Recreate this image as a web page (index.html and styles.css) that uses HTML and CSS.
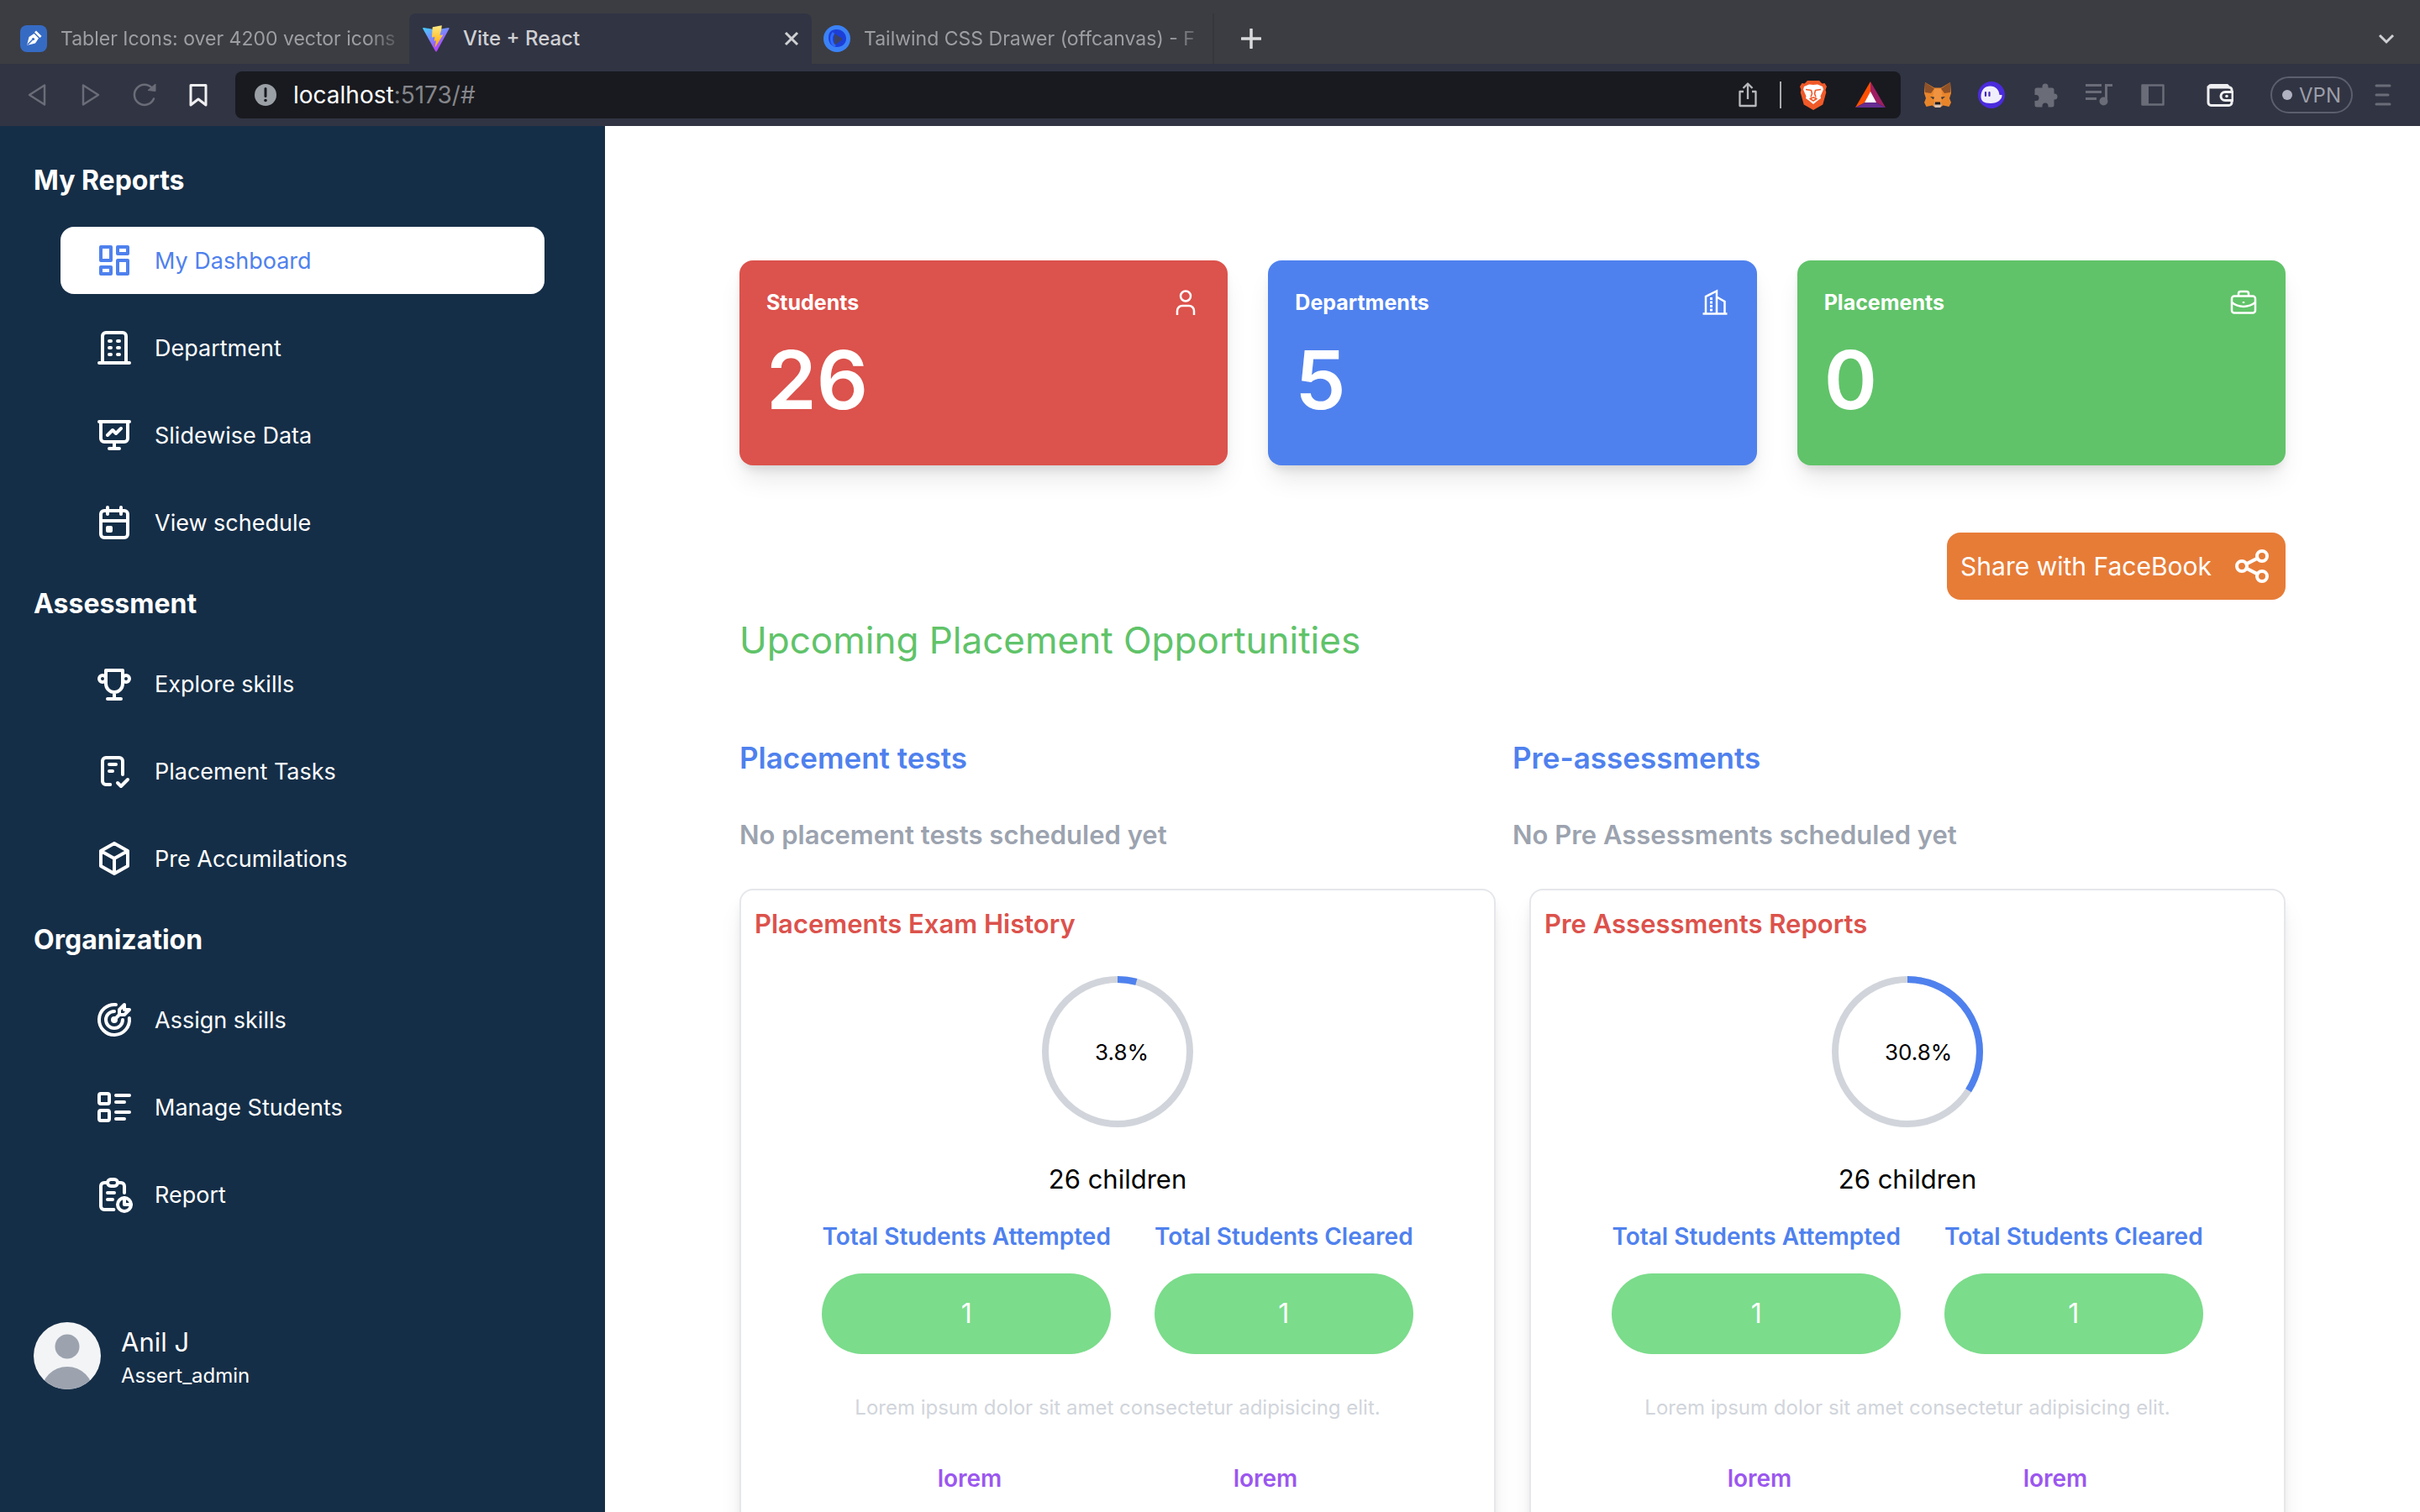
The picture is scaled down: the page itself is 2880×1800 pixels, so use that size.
FILE: index.html
```html
<!DOCTYPE html>
<html lang="en">
<head>
<meta charset="utf-8">
<meta name="viewport" content="width=device-width, initial-scale=1">
<title>Vite + React</title>
<link rel="stylesheet" href="styles.css">
</head>
<body>
<header class="browser">
  <div class="tabs">
    <div class="tab">
      <svg class="favicon" viewBox="0 0 32 32"><rect width="32" height="32" rx="8" fill="#366bc4"/><path d="M8 24l2.500-10 6-4 5.500 5.500-4 6z" fill="#fff"/><path d="M17 8.500l2-2 6.500 6.500-2 2z" fill="#fff"/><path d="M8.500 23.500l6-6" stroke="#366bc4" stroke-width="1.500"/><circle cx="15.500" cy="16.500" r="1.600" fill="#366bc4"/></svg>
      <span class="tab-title tab-title-fade">Tabler Icons: over 4200 vector icons</span>
    </div>
    <div class="tab tab-active">
      <svg class="favicon" viewBox="0 0 32 32"><defs><linearGradient id="vite-a" x1="0" y1="0" x2="0.600" y2="1"><stop offset="0" stop-color="#41d1ff"/><stop offset="1" stop-color="#bd34fe"/></linearGradient><linearGradient id="vite-b" x1="0" y1="0" x2="0" y2="1"><stop offset="0" stop-color="#ffea83"/><stop offset="1" stop-color="#ffa800"/></linearGradient></defs><path d="M31.500 4.300L16.900 30.900a1 1 0 0 1-1.700 0L.300 4.300a1 1 0 0 1 1-1.400L16 5.500l14.600-2.600a1 1 0 0 1 .9 1.400z" fill="url(#vite-a)"/><path d="M22.800.200L12 2.300a.5.500 0 0 0-.3.400l-.7 11.300a.5.500 0 0 0 .5.500l3.100-.7-1 4.500c0 .3.200.6.600.5l1.900-.6-1.500 7.100c-.1.500.5.700.8.300L24 12c.2-.3 0-.7-.4-.6l-3.200.6 1.900-6.900z" fill="url(#vite-b)"/></svg>
      <span class="tab-title">Vite + React</span>
      <button class="tab-close" aria-label="Close tab"><svg viewBox="0 0 20 20"><path d="M3 3l14 14M17 3L3 17" fill="none" stroke="currentColor" stroke-width="3"/></svg></button>
    </div>
    <div class="tab tab-last">
      <svg class="favicon" viewBox="0 0 32 32"><circle cx="16" cy="16" r="16" fill="#3b82f6"/><path d="M9 7c8-5 18 0 18 9 0 6-5 10-11 10-7 0-10-6-10-11 0-4 1-6 3-8z" fill="#1c3fd8"/><path d="M13 10l8 5c2 1 1 3-1 4l-7 5z" fill="#3c4263"/><path d="M12 9c-4 5-3 13 2 16" fill="none" stroke="#2f6af5" stroke-width="3"/></svg>
      <span class="tab-title tab-title-fade">Tailwind CSS Drawer (offcanvas) - F</span>
    </div>
    <button class="tab-new" aria-label="New tab"><svg viewBox="0 0 24 24"><path d="M12 1v22M1 12h22" fill="none" stroke="currentColor" stroke-width="3.500" stroke-linecap="round"/></svg></button>
    <button class="tab-search" aria-label="Search tabs"><svg viewBox="0 0 24 24"><path d="M4 8l8 8 8-8" fill="none" stroke="currentColor" stroke-width="3"/></svg></button>
  </div>
  <div class="toolbar">
    <button class="tool dim" aria-label="Back"><svg viewBox="0 0 32 32"><path d="M25 4.500v23L7 16z" fill="none" stroke="currentColor" stroke-width="2.500" stroke-linejoin="round"/></svg></button>
    <button class="tool dim" aria-label="Forward"><svg viewBox="0 0 32 32"><path d="M7 4.500v23L25 16z" fill="none" stroke="currentColor" stroke-width="2.500" stroke-linejoin="round"/></svg></button>
    <button class="tool dim" aria-label="Reload"><svg viewBox="0 0 32 32"><path d="M27 20.500A12 12 0 1 1 25 8" fill="none" stroke="currentColor" stroke-width="2.500" stroke-linecap="round"/><path d="M20 10.500l9 1V3z" fill="currentColor" stroke="currentColor" stroke-width="1"/></svg></button>
    <button class="tool bright" aria-label="Bookmark"><svg viewBox="0 0 32 32"><path d="M7 4.500h18v23.500l-9-7-9 7z" fill="none" stroke="currentColor" stroke-width="3" stroke-linejoin="round"/></svg></button>
    <div class="address">
      <svg class="site-info" viewBox="0 0 26 26"><circle cx="13" cy="13" r="13" fill="#9aa0a6"/><path d="M13 5.500v9" stroke="#191a1f" stroke-width="3" stroke-linecap="round"/><circle cx="13" cy="19.500" r="1.800" fill="#191a1f"/></svg>
      <div class="url" role="textbox" aria-label="Address"><span class="url-host">localhost</span>:5173/#</div>
      <button class="tool share-page" aria-label="Share this page"><svg viewBox="0 0 32 32"><path d="M11 12H6.500v17h19V12H21M16 21V3M10.500 8L16 2.500 21.500 8" fill="none" stroke="currentColor" stroke-width="2.300" stroke-linejoin="round"/></svg></button>
      <span class="divider"></span>
      <button class="tool" aria-label="Brave Shields"><svg class="tall" viewBox="0 0 32 36"><path d="M9 1h14l3.500 3.500 3-.5 2.500 4-1.500 4 .8 3-4 14.500L16 36 4.700 29.500.700 15l.8-3L0 8l2.500-4 3 .5z" fill="#f15a29"/><path d="M16 6l5-.6L27 8l1 3.500-3.500 8 .5 2.500-3.500 2.500L16 29l-5.500-4.500L7 22l.5-2.500L4 11.500 5 8l6-2.600z" fill="#fff"/><path d="M7 11.500l6.500 1 1 4-1.500 4M25 11.500l-6.500 1-1 4 1.500 4M12 22.500l4-1.500 4 1.500-4 2.500z" fill="none" stroke="#f15a29" stroke-width="1.600" stroke-linejoin="round"/></svg></button>
      <button class="tool rewards" aria-label="Brave Rewards"><svg class="wide" viewBox="0 0 36 32"><path d="M18 0L0 31l11.500-6L18 13z" fill="#ff5000"/><path d="M18 0v13l6.500 12L36 31z" fill="#9e1f63"/><path d="M0 31l11.500-6h13L36 31z" fill="#662d91"/><path d="M18 12l7 13H11z" fill="#fff"/></svg></button>
    </div>
    <div class="extensions">
      <button class="tool" aria-label="MetaMask"><svg viewBox="0 0 32 32"><path d="M1 1l11 6.500h8L31 1l1 13-2 6 2 5-2.500 5-7-1.500L19 31h-6l-3.500-2.500-7 1.500L0 25l2-5-2-6z" fill="#e8852b"/><path d="M1 1l11 7.500-4 5.500-7-1zM31 1l-11 7.500 4 5.500 7-1z" fill="#8f5128"/><path d="M12 8.500h8l2 11-3 6h-6l-3-6z" fill="#f09340"/><path d="M7 18l5 .5-1 3zM25 18l-5 .5 1 3z" fill="#3d3a3a"/><path d="M12.500 25h7l1 3-1.500 3h-6l-1.500-3z" fill="#d7c1b3"/><path d="M13 24.500h6l.500 3h-7z" fill="#1d1b1b"/></svg></button>
      <button class="tool" aria-label="Phantom"><svg viewBox="0 0 32 32"><circle cx="16" cy="16" r="16" fill="#4b2bdc"/><path d="M3.500 18C3.500 10 8 5.500 14.500 5.500S25 10 25.500 16h3c.5 5-5 10-13.500 10S3.500 23 3.500 18z" fill="#f1eefb"/><path d="M9 13v4M13.500 13v4" stroke="#4329b8" stroke-width="2.200" stroke-linecap="round"/></svg></button>
      <button class="tool dim" aria-label="Extensions"><svg viewBox="0 0 32 32"><path d="M12.500 6a3.500 3.500 0 0 1 7 0v1.500H24a2.500 2.500 0 0 1 2.500 2.500v4.500h.5a3.500 3.500 0 0 1 0 7h-.5V28a2.500 2.500 0 0 1-2.500 2.500h-4.500v-1.500a3.500 3.500 0 0 0-7 0v1.500H6A2.500 2.500 0 0 1 3.500 28v-5H5a3.500 3.500 0 0 0 0-7H3.500v-6A2.500 2.500 0 0 1 6 7.500h6.500z" fill="currentColor"/></svg></button>
      <button class="tool dim" aria-label="Media"><svg viewBox="0 0 32 32"><path d="M0 4.500h19M0 12.500h19M0 20.500h13" stroke="currentColor" stroke-width="3"/><path d="M24.500 24V4.500H32" fill="none" stroke="currentColor" stroke-width="3"/><circle cx="21.500" cy="23.500" r="5" fill="currentColor"/></svg></button>
      <button class="tool dim" aria-label="Side panel"><svg viewBox="0 0 32 32"><path d="M3.500 4.500h25v23h-25z" fill="none" stroke="currentColor" stroke-width="2.500" stroke-linejoin="round"/><path d="M3 4h8v24H3z" fill="currentColor"/></svg></button>
    </div>
    <button class="tool bright wallet" aria-label="Wallet"><svg viewBox="0 0 32 32"><path d="M30 12V10a3 3 0 0 0-3-3H2V25a3.500 3.500 0 0 0 3.500 3.500H26.500A3.500 3.500 0 0 0 30 25v-2M2 8a3.500 3.500 0 0 1 3.500-3.500H24.500L28 8" fill="none" stroke="currentColor" stroke-width="3"/><path d="M31 12.500H22a5 5 0 0 0 0 10h9z" fill="none" stroke="currentColor" stroke-width="3"/><circle cx="24" cy="17.500" r="1.800" fill="currentColor"/></svg></button>
    <button class="vpn"><span class="vpn-dot"></span>VPN</button>
    <button class="tool dim menu" aria-label="Menu"><svg viewBox="0 0 32 32"><path d="M8 5h16M8 16h14M8 27h16" stroke="currentColor" stroke-width="3" stroke-linecap="round"/></svg></button>
  </div>
</header>

<div class="app">
  <aside class="sidebar">
    <nav class="nav">
      <h2 class="nav-heading">My Reports</h2>
      <ul class="nav-list">
        <li><a class="nav-link nav-link-active" href="#"><svg class="icon" viewBox="0 0 24 24"><path d="M4 4h6v8H4zM4 16h6v4H4zM14 12h6v8h-6zM14 4h6v4h-6z"/></svg>My Dashboard</a></li>
        <li><a class="nav-link" href="#"><svg class="icon" viewBox="0 0 24 24"><path d="M3 21h18M9 8h1M9 12h1M9 16h1M14 8h1M14 12h1M14 16h1M5 21V5a2 2 0 0 1 2-2h10a2 2 0 0 1 2 2v16"/></svg>Department</a></li>
        <li><a class="nav-link" href="#"><svg class="icon" viewBox="0 0 24 24"><path d="M3 4h18M4 4v10a2 2 0 0 0 2 2h12a2 2 0 0 0 2-2V4M12 16v4M9 20h6M8 12l3-3 2 2 3-3"/></svg>Slidewise Data</a></li>
        <li><a class="nav-link" href="#"><svg class="icon" viewBox="0 0 24 24"><path d="M4 7a2 2 0 0 1 2-2h12a2 2 0 0 1 2 2v12a2 2 0 0 1-2 2H6a2 2 0 0 1-2-2zM16 3v4M8 3v4M4 11h16M8 15h2v2H8z"/></svg>View schedule</a></li>
      </ul>
      <h2 class="nav-heading">Assessment</h2>
      <ul class="nav-list">
        <li><a class="nav-link" href="#"><svg class="icon" viewBox="0 0 24 24"><path d="M8 21h8M12 17v4M7 4h10M17 4v8a5 5 0 0 1-10 0V4"/><circle cx="5" cy="9" r="2"/><circle cx="19" cy="9" r="2"/></svg>Explore skills</a></li>
        <li><a class="nav-link" href="#"><svg class="icon" viewBox="0 0 24 24"><path d="M9.615 20H7a2 2 0 0 1-2-2V6a2 2 0 0 1 2-2h8a2 2 0 0 1 2 2v8M14 19l2 2 4-4M9 8h4M9 12h2"/></svg>Placement Tasks</a></li>
        <li><a class="nav-link" href="#"><svg class="icon" viewBox="0 0 24 24"><path d="M12 3l8 4.500v9L12 21l-8-4.500v-9zM12 12l8-4.500M12 12v9M12 12L4 7.500"/></svg>Pre Accumilations</a></li>
      </ul>
      <h2 class="nav-heading">Organization</h2>
      <ul class="nav-list">
        <li><a class="nav-link" href="#"><svg class="icon" viewBox="0 0 24 24"><circle cx="12" cy="12" r="1"/><path d="M12 7a5 5 0 1 0 5 5M13 3.055A9 9 0 1 0 20.941 11M15 6v3h3l3-3h-3V3zM15 9l-3 3"/></svg>Assign skills</a></li>
        <li><a class="nav-link" href="#"><svg class="icon" viewBox="0 0 24 24"><path d="M13 5h8M13 9h5M13 15h8M13 19h5"/><rect x="3" y="4" width="6" height="6" rx="1"/><rect x="3" y="14" width="6" height="6" rx="1"/></svg>Manage Students</a></li>
        <li><a class="nav-link" href="#"><svg class="icon" viewBox="0 0 24 24"><path d="M8 5H6a2 2 0 0 0-2 2v12a2 2 0 0 0 2 2h5.697M18 14v4h4M18 11V7a2 2 0 0 0-2-2h-2M8 11h4M8 15h3"/><rect x="8" y="3" width="6" height="4" rx="2"/><circle cx="18" cy="18" r="4"/></svg>Report</a></li>
      </ul>
    </nav>
    <div class="profile">
      <svg class="avatar" viewBox="0 0 80 80"><defs><clipPath id="avatar-clip"><circle cx="40" cy="40" r="40"/></clipPath></defs><g clip-path="url(#avatar-clip)"><rect width="80" height="80" fill="#f3f4f6"/><circle cx="40" cy="29" r="14.500" fill="#9ca3af"/><circle cx="40" cy="84" r="31" fill="#9ca3af"/></g></svg>
      <div>
        <p class="profile-name">Anil J</p>
        <p class="profile-role">Assert_admin</p>
      </div>
    </div>
  </aside>

  <main class="content">
    <section class="stats">
      <article class="stat stat-red">
        <div class="stat-head"><h3 class="stat-title">Students</h3><svg class="stat-icon" viewBox="0 0 32 32"><path d="M16 2.500a6 6 0 1 1 0 12 6 6 0 0 1 0-12zM6 31v-5a6 6 0 0 1 6-6h8a6 6 0 0 1 6 6v5"/></svg></div>
        <p class="stat-value">26</p>
      </article>
      <article class="stat stat-blue">
        <div class="stat-head"><h3 class="stat-title">Departments</h3><svg class="stat-icon" viewBox="0 0 32 32"><path d="M1.500 29.500h29M5 29V9l13-6.500V29M18 9.500l9.500 5.500v14"/><path d="M11.500 10v17" stroke-width="3" stroke-dasharray="3 1.500"/></svg></div>
        <p class="stat-value">5</p>
      </article>
      <article class="stat stat-green">
        <div class="stat-head"><h3 class="stat-title">Placements</h3><svg class="stat-icon" viewBox="0 0 32 32"><rect x="2" y="8.500" width="28" height="20" rx="3"/><path d="M10 8V5.500A2.500 2.500 0 0 1 12.500 3h7A2.500 2.500 0 0 1 22 5.500V8M2 16c8 6.500 20 6.500 28 0M16 15v2"/></svg></div>
        <p class="stat-value">0</p>
      </article>
    </section>

    <button class="share"><span>Share with FaceBook</span><svg class="icon" viewBox="0 0 24 24"><circle cx="6" cy="12" r="3"/><circle cx="18" cy="6" r="3"/><circle cx="18" cy="18" r="3"/><path d="M8.700 10.700l6.600-3.400M8.700 13.300l6.600 3.400"/></svg></button>

    <h1 class="page-title">Upcoming Placement Opportunities</h1>

    <section class="upcoming">
      <div><h2 class="upcoming-title">Placement tests</h2><p class="upcoming-empty">No placement tests scheduled yet</p></div>
      <div><h2 class="upcoming-title">Pre-assessments</h2><p class="upcoming-empty">No Pre Assessments scheduled yet</p></div>
    </section>

    <section class="panels">
      <article class="panel">
        <h2 class="panel-title">Placements Exam History</h2>
        <svg class="ring" viewBox="0 0 180 180"><circle class="ring-track" cx="90" cy="90" r="86"/><circle class="ring-bar" cx="90" cy="90" r="86" pathLength="100" stroke-dasharray="4.200 100" transform="rotate(-90 90 90)"/><text class="ring-text" x="63" y="100">3.8%</text></svg>
        <p class="children">26 children</p>
        <dl class="totals">
          <div><dt class="total-label">Total Students Attempted</dt><dd class="total-value">1</dd></div>
          <div><dt class="total-label">Total Students Cleared</dt><dd class="total-value">1</dd></div>
        </dl>
        <p class="note">Lorem ipsum dolor sit amet consectetur adipisicing elit.</p>
        <div class="tags"><span>lorem</span><span>lorem</span></div>
      </article>
      <article class="panel">
        <h2 class="panel-title">Pre Assessments Reports</h2>
        <svg class="ring" viewBox="0 0 180 180"><circle class="ring-track" cx="90" cy="90" r="86"/><circle class="ring-bar" cx="90" cy="90" r="86" pathLength="100" stroke-dasharray="34 100" transform="rotate(-90 90 90)"/><text class="ring-text" x="63" y="100">30.8%</text></svg>
        <p class="children">26 children</p>
        <dl class="totals">
          <div><dt class="total-label">Total Students Attempted</dt><dd class="total-value">1</dd></div>
          <div><dt class="total-label">Total Students Cleared</dt><dd class="total-value">1</dd></div>
        </dl>
        <p class="note">Lorem ipsum dolor sit amet consectetur adipisicing elit.</p>
        <div class="tags"><span>lorem</span><span>lorem</span></div>
      </article>
    </section>
  </main>
</div>
</body>
</html>
```
FILE: styles.css
```css
* { box-sizing: border-box; margin: 0; padding: 0; }

body {
  display: flex;
  flex-direction: column;
  height: 100vh;
  overflow: hidden;
  font-family: Inter, "Liberation Sans", sans-serif;
  font-size: 28px;
  color: #000;
  background: #fff;
}

button { border: 0; background: none; font: inherit; color: inherit; cursor: pointer; }
ul { list-style: none; }
svg { display: block; flex: none; }

/* Browser chrome */
.browser { flex: none; color: #cfd0d3; background: #313443; }
.tabs { display: flex; align-items: stretch; height: 76px; padding: 16px 16px 0 8px; background: #3c3d42; }
.tab { display: flex; align-items: center; gap: 16px; width: 479px; padding: 0 2px 0 16px; color: #9d9ea2; font-size: 23px; }
.tab-active { padding-right: 8px; color: #cfd0d3; font-size: 24px; font-weight: 500; background: #313443; border-radius: 8px 8px 0 0; }
.tab-last { padding-left: 14px; border-right: 2px solid #36373b; }
.favicon { width: 32px; height: 32px; }
.tab-title { flex: 1; min-width: 0; overflow: hidden; line-height: 32px; white-space: nowrap; }
.tab-title-fade {
  -webkit-mask-image: linear-gradient(to left, transparent, #000 48px);
  mask-image: linear-gradient(to left, transparent, #000 48px);
}
.tab-close { padding: 0 6px; }
.tab-close svg { width: 20px; height: 20px; }
.tab-new { padding: 0 32px; color: #d9dadc; }
.tab-new svg, .tab-search svg { width: 24px; height: 24px; }
.tab-search { margin-left: auto; padding: 0 12px; }

.toolbar { display: flex; align-items: center; height: 74px; padding: 0 12px; }
.tool { display: flex; flex: none; align-items: center; justify-content: center; width: 64px; height: 56px; }
.tool svg { width: 32px; height: 32px; }
.tool .tall { height: 36px; }
.tool .wide { width: 38px; }
.dim { color: #6a6c78; }
.bright { color: #efeff1; }
.address {
  display: flex;
  flex: 1;
  align-items: center;
  height: 56px;
  margin: 0 12px;
  padding: 0 4px 0 23px;
  background: #191a1f;
  border-radius: 8px;
}
.site-info { width: 26px; height: 26px; margin-right: 20px; }
.url { flex: 1; color: #85868b; line-height: 40px; }
.url-host { color: #fff; }
.share-page { color: #b9babd; }
.divider { width: 2px; height: 32px; margin: 0 6px; background: #a9aaad; }
.rewards { margin-left: 4px; }
.extensions { display: flex; }
.wallet { margin-left: 16px; }
.vpn {
  display: flex;
  align-items: center;
  justify-content: center;
  gap: 8px;
  width: 98px;
  height: 44px;
  margin: 0 4px 0 28px;
  color: #9c9ea8;
  font-size: 24px;
  border: 2px solid #5c5f6e;
  border-radius: 22px;
}
.vpn-dot { width: 12px; height: 12px; background: #b0b2c2; border-radius: 50%; }

/* Application shell */
.app { display: flex; flex: 1; min-height: 0; }
.sidebar { width: 25%; padding: 40px; overflow: hidden; color: #fff; background: #152e47; }
.nav { display: flex; flex-direction: column; gap: 32px; }
.nav-heading { padding-top: 2px; font-size: 32px; font-weight: 700; line-height: 46px; }
.nav-list { display: flex; flex-direction: column; gap: 24px; padding: 0 32px; }
.nav-link {
  display: flex;
  align-items: center;
  gap: 24px;
  height: 80px;
  padding: 0 40px;
  color: inherit;
  font-size: 27px;
  text-decoration: none;
  border-radius: 16px;
}
.nav-link-active { color: #4f81ee; background: #fff; }
.icon {
  width: 48px;
  height: 48px;
  fill: none;
  stroke: currentColor;
  stroke-width: 2;
  stroke-linecap: round;
  stroke-linejoin: round;
}
.profile { display: flex; align-items: center; gap: 24px; margin-top: 112px; }
.avatar { width: 80px; height: 80px; }
.profile-name { font-size: 31px; line-height: 48px; }
.profile-role { font-size: 24px; line-height: 32px; }

.content {
  display: flex;
  flex: 1;
  flex-direction: column;
  padding: 160px 160px 80px;
  overflow-y: auto;
  scrollbar-width: none;
}
.content > * { flex: none; }

/* Summary cards */
.stats { display: grid; grid-template-columns: repeat(3, 1fr); gap: 48px; }
.stat {
  padding: 32px 32px 54px;
  color: #fff;
  border-radius: 16px;
  box-shadow: 0 20px 30px -6px rgba(0, 0, 0, 0.1), 0 8px 12px -4px rgba(0, 0, 0, 0.1);
}
.stat-red { background: #dc524c; }
.stat-blue { background: #4f81ee; }
.stat-green { background: #60c369; }
.stat-head { display: flex; align-items: center; justify-content: space-between; height: 36px; padding-right: 2px; }
.stat-title { font-size: 25px; font-weight: 700; }
.stat-icon { width: 32px; height: 32px; fill: none; stroke: currentColor; stroke-width: 2.500; }
.stat-value { margin-top: 26px; font-size: 96px; font-weight: 600; line-height: 96px; }

.share {
  display: flex;
  align-items: center;
  align-self: flex-end;
  gap: 24px;
  height: 80px;
  margin-top: 80px;
  padding: 0 16px;
  color: #fff;
  font-size: 30px;
  background: #e77c37;
  border-radius: 16px;
}

.page-title { margin-top: 16px; color: #60c369; font-size: 44px; font-weight: 400; line-height: 64px; }

.upcoming { display: grid; grid-template-columns: repeat(2, 1fr); margin-top: 80px; }
.upcoming-title { color: #4f81ee; font-size: 35px; font-weight: 600; line-height: 56px; }
.upcoming-empty { margin-top: 40px; color: #9ca3af; font-size: 31px; font-weight: 600; line-height: 48px; }

/* Report panels */
.panels { display: grid; grid-template-columns: repeat(2, 1fr); gap: 40px; margin-top: 40px; }
.panel {
  display: flex;
  flex-direction: column;
  align-items: center;
  padding: 16px 16px 80px;
  border: 2px solid #e5e7eb;
  border-radius: 16px;
  box-shadow: 0 20px 30px -6px rgba(0, 0, 0, 0.1), 0 8px 12px -4px rgba(0, 0, 0, 0.1);
}
.panel-title { align-self: stretch; color: #dc524c; font-size: 31px; font-weight: 600; line-height: 48px; }
.ring { width: 180px; height: 180px; margin: 38px 0; }
.ring-track, .ring-bar { fill: none; stroke-width: 8; }
.ring-track { stroke: #d1d5db; }
.ring-bar { stroke: #4f81ee; }
.ring-text { font-size: 26px; }
.children { font-size: 31px; line-height: 48px; }
.totals { display: flex; gap: 52px; margin-top: 24px; text-align: center; }
.total-label { color: #4f81ee; font-weight: 600; line-height: 40px; }
.total-value {
  margin-top: 24px;
  color: #fff;
  font-size: 32px;
  line-height: 96px;
  background: #7bdc8b;
  border-radius: 48px;
}
.note { margin-top: 48px; color: #d1d5db; font-size: 24px; line-height: 32px; }
.tags {
  display: grid;
  grid-template-columns: repeat(2, 352px);
  margin-top: 48px;
  color: #9b57ef;
  font-weight: 600;
  line-height: 40px;
  text-align: center;
}
```
